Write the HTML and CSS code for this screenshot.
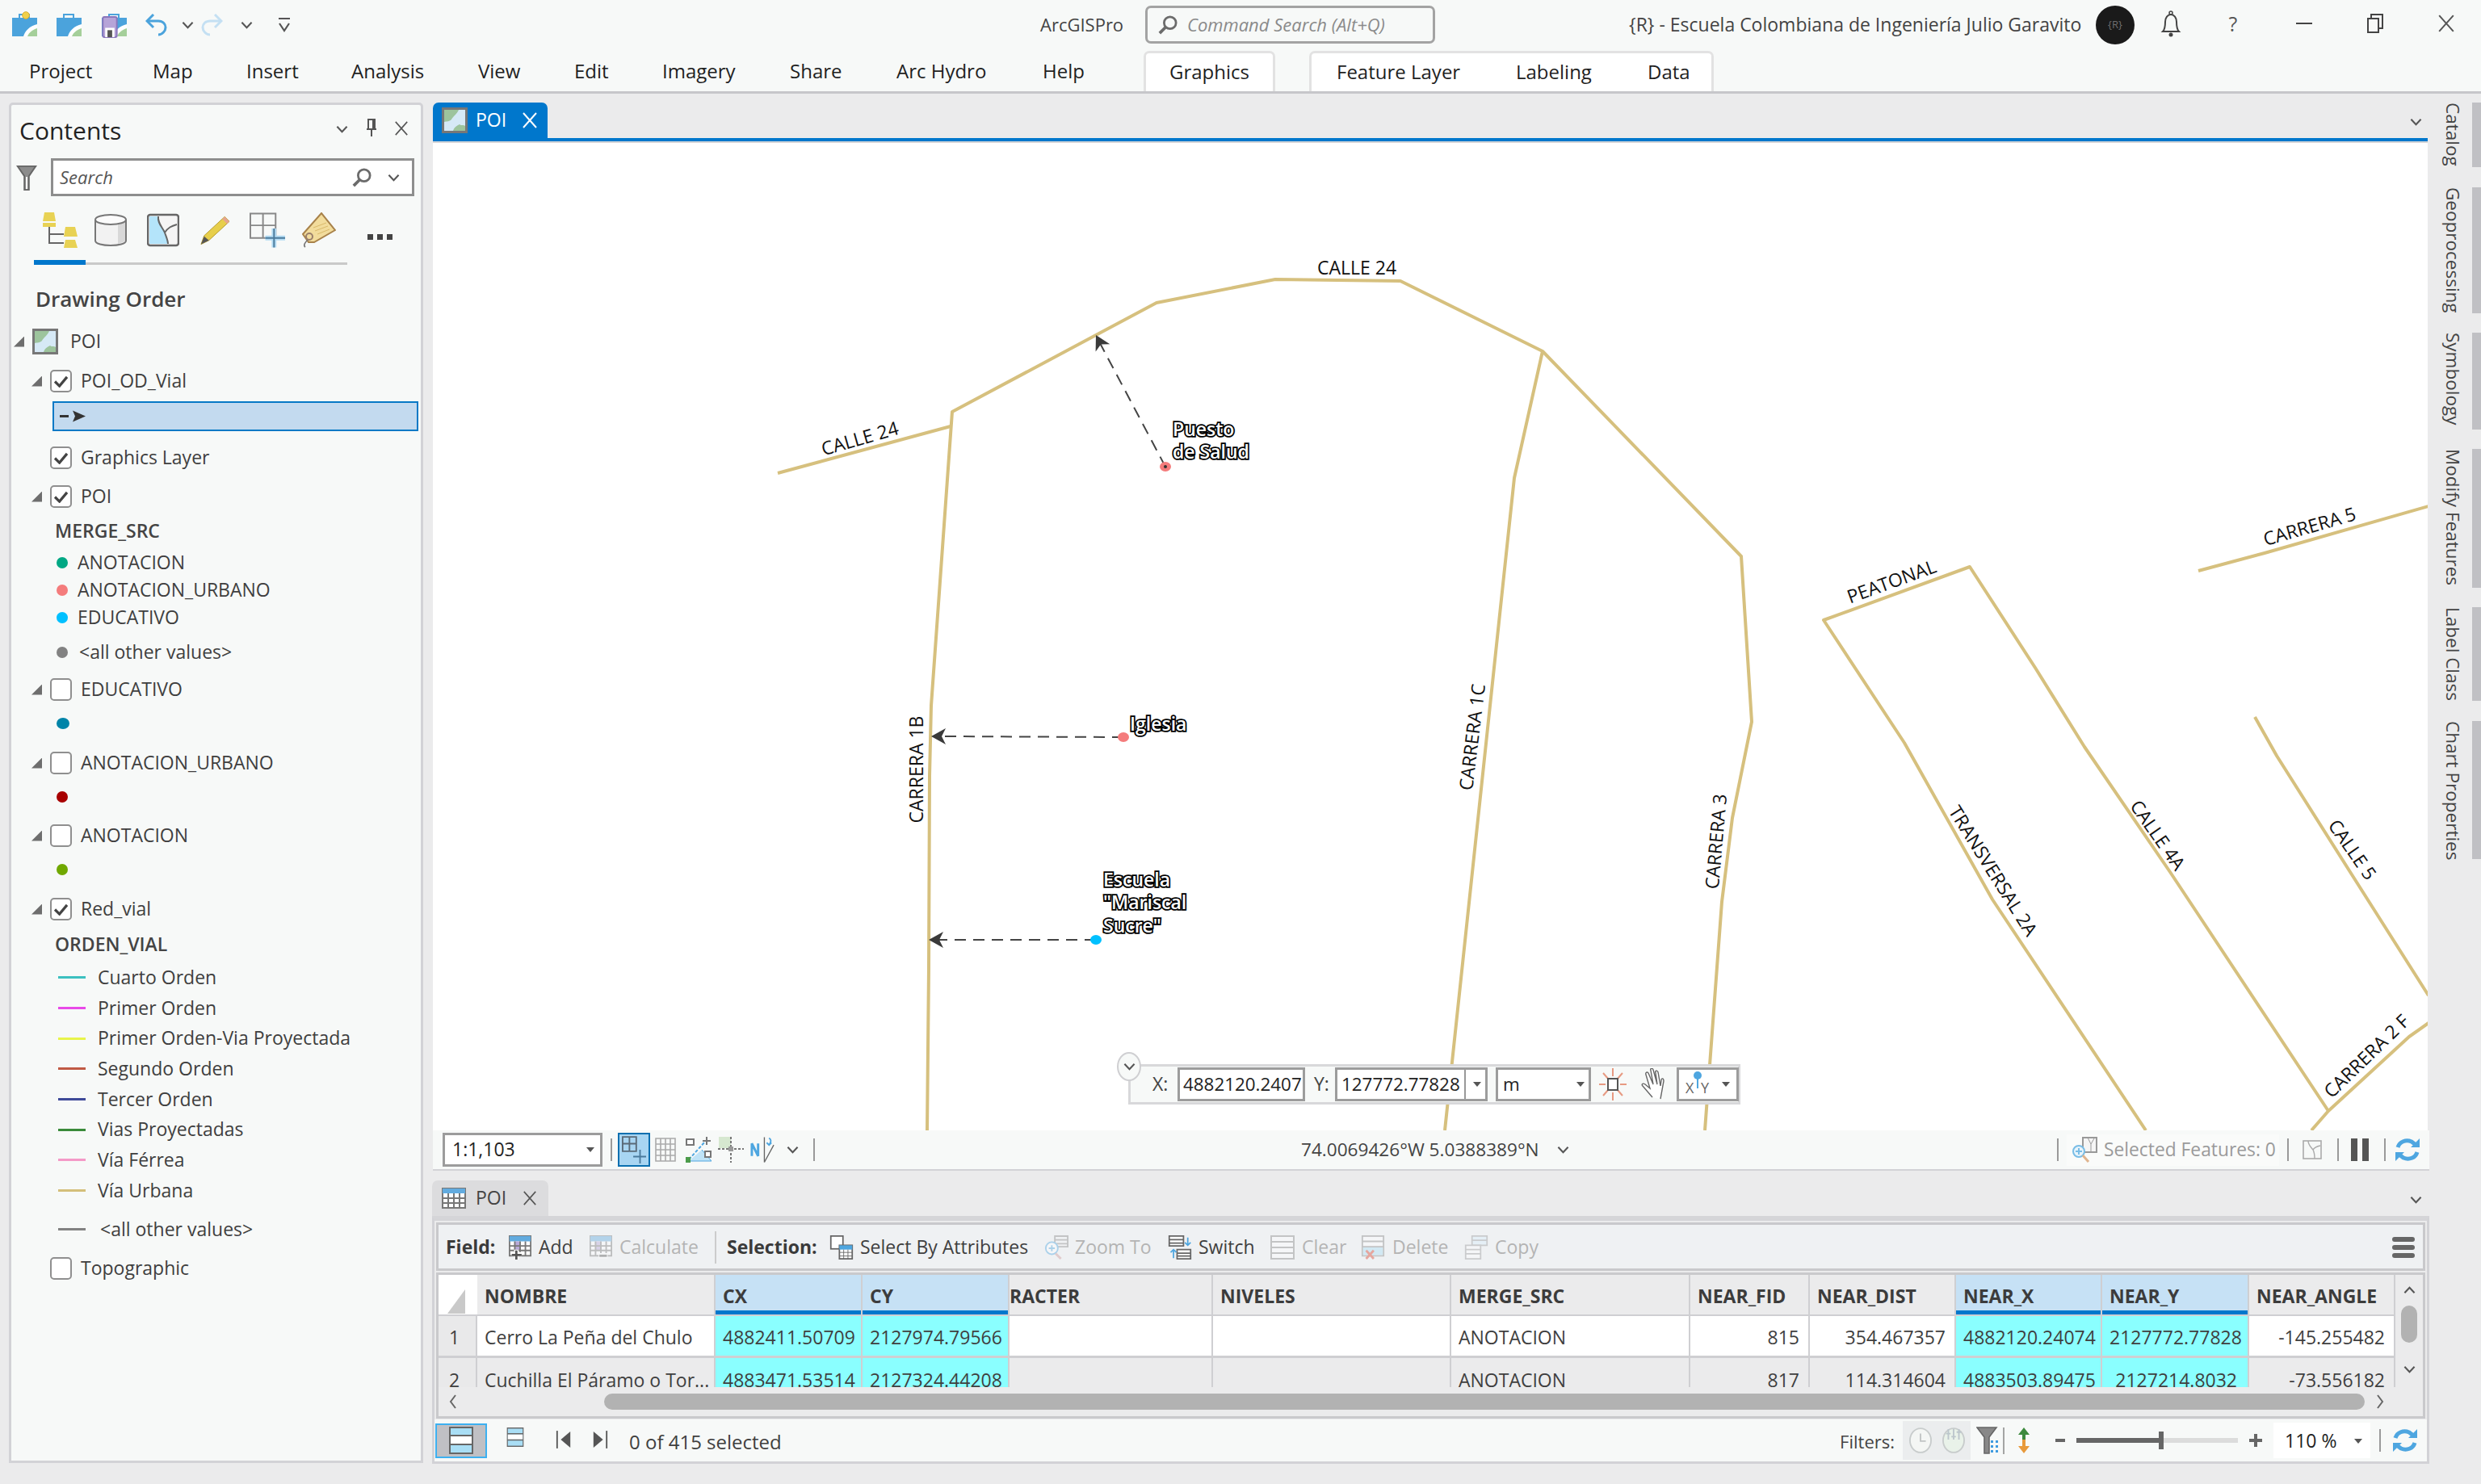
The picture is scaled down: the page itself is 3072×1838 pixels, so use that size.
FILE: index.html
```
<!DOCTYPE html>
<html lang="en">
<head>
<meta charset="utf-8">
<title>ArcGIS Pro</title>
<link rel="stylesheet" href="styles.css">
</head>
<body>
<svg class="defs" width="0" height="0" aria-hidden="true">
  <symbol id="proj" viewBox="0 0 31 28">
    <path d="M9 5V1h12v4" fill="none" stroke="#4ba3dc" stroke-width="2"/>
    <rect x="0" y="5" width="31" height="23" fill="#4ba3dc"/>
    <path d="M14 28c2-7 8-13 17-15v15z" fill="#fff"/>
    <path d="M19 28c2-5 6-8 12-10v10z" fill="#a5cf9a"/>
  </symbol>
  <symbol id="mapthumb" viewBox="0 0 32 32">
    <rect x="1.5" y="1.5" width="29" height="29" fill="#d6e9f6" stroke="#777" stroke-width="3"/>
    <path d="M3 3h18c-2 5-7 8-9 12-3 3-6 2-9 3zM14 29c1-4 4-6 8-8 2 2 5 0 7 2v6z" fill="#9dc49d"/>
  </symbol>
  <symbol id="caret" viewBox="0 0 12 8"><path d="M1 1l5 6 5-6z" fill="#555"/></symbol>
  <symbol id="chev" viewBox="0 0 16 10"><path d="M1.5 1.5L8 8.5l6.5-7" fill="none" stroke="#555" stroke-width="2.2"/></symbol>
  <symbol id="close" viewBox="0 0 20 20"><path d="M2 1l16 18M18 1L2 19" fill="none" stroke="#555" stroke-width="1.8"/></symbol>
  <symbol id="lens" viewBox="0 0 26 26"><circle cx="16" cy="10" r="8" fill="none" stroke="#6b6b6b" stroke-width="3"/><path d="M10 16l-8 8" stroke="#6b6b6b" stroke-width="4"/></symbol>
  <symbol id="check" viewBox="0 0 20 16"><path d="M2 8l6 6L18 2" fill="none" stroke="#444" stroke-width="3.4"/></symbol>
  <symbol id="refresh" viewBox="0 0 32 32">
    <path d="M4 13C6 6 14 3 21 6l4 3M28 19c-2 7-10 10-17 7l-4-3" fill="none" stroke="#4ea6e0" stroke-width="5"/>
    <path d="M31 2v11H20zM1 30V19h11z" fill="#4ea6e0"/>
  </symbol>
  <symbol id="tableic" viewBox="0 0 30 26">
    <rect x="1" y="1" width="28" height="24" fill="#fff" stroke="#777" stroke-width="2"/>
    <rect x="1" y="1" width="28" height="6" fill="#62abdf"/>
    <path d="M1 13h28M1 19h28M8 7v18M15 7v18M22 7v18" stroke="#777" stroke-width="2"/>
  </symbol>
  <symbol id="rows" viewBox="0 0 30 30">
    <rect x="1" y="1" width="28" height="28" fill="#fff" stroke="#888" stroke-width="2"/>
    <path d="M1 8h28M1 15h28M1 22h28" stroke="#888" stroke-width="2"/>
  </symbol>
  <symbol id="rowsblue" viewBox="0 0 30 34">
    <rect x="1" y="1" width="28" height="32" fill="#a9def5" stroke="#666" stroke-width="2"/>
    <rect x="2" y="12" width="26" height="9" fill="#fff"/>
    <path d="M1 11h28M1 22h28" stroke="#666" stroke-width="2"/>
  </symbol>
  <symbol id="tablefield" viewBox="0 0 30 32">
    <rect x="1" y="1" width="28" height="26" fill="#fff" stroke="#777" stroke-width="2"/>
    <rect x="1" y="1" width="28" height="7" fill="#62abdf"/>
    <rect x="8" y="8" width="7" height="12" fill="#b9a9d8"/>
    <path d="M1 14h28M1 20h28M8 8v19M15 8v19M22 8v19" stroke="#777" stroke-width="2"/>
  </symbol>
</svg>

<div class="app">
  <header class="titlebar">
    <div class="qat">
      <button class="qa qa-save"><svg class="i31" aria-hidden="true"><use href="#proj"/></svg><svg class="sun" viewBox="0 0 16 16" aria-hidden="true"><circle cx="8" cy="8" r="5" fill="#f0d04a" stroke="#d5a82a"/></svg></button>
      <button class="qa qa-open"><svg class="i31" aria-hidden="true"><use href="#proj"/></svg></button>
      <button class="qa qa-saveas"><svg class="i31" aria-hidden="true"><use href="#proj"/></svg><svg class="floppy" viewBox="0 0 20 28" aria-hidden="true"><rect x="1" y="1" width="18" height="26" rx="2" fill="#b6a4d8" stroke="#8a76bc" stroke-width="2"/><rect x="4" y="15" width="12" height="12" fill="#fff"/><rect x="7" y="18" width="6" height="9" fill="#555"/></svg></button>
      <button class="qa qa-undo"><svg class="i28" viewBox="0 0 28 28" aria-hidden="true"><path d="M3 9h13c6 0 9 4 9 8s-4 9-9 9" fill="none" stroke="#4ba3dc" stroke-width="3"/><path d="M10 1L2 9l8 8" fill="none" stroke="#4ba3dc" stroke-width="3"/></svg></button>
      <button class="qa qa-c1"><svg class="i14" aria-hidden="true"><use href="#chev"/></svg></button>
      <button class="qa qa-redo"><svg class="i28" viewBox="0 0 28 28" aria-hidden="true"><path d="M25 9H12c-6 0-9 4-9 8s4 9 9 9" fill="none" stroke="#c4e0f3" stroke-width="3"/><path d="M18 1l8 8-8 8" fill="none" stroke="#c4e0f3" stroke-width="3"/></svg></button>
      <button class="qa qa-c2"><svg class="i14" aria-hidden="true"><use href="#chev"/></svg></button>
      <button class="qa qa-more"><svg class="i16" viewBox="0 0 16 18" aria-hidden="true"><path d="M1 1h14M2 7l6 9 6-9" fill="none" stroke="#555" stroke-width="2.2"/></svg></button>
    </div>
    <div class="app-name">ArcGISPro</div>
    <div class="cmd-search"><svg class="i24" aria-hidden="true"><use href="#lens"/></svg><span>Command Search (Alt+Q)</span></div>
    <div class="user-name">{R} - Escuela Colombiana de Ingeniería Julio Garavito</div>
    <div class="avatar">{R}</div>
    <button class="win win-bell"><svg class="bell" viewBox="0 0 26 34" aria-hidden="true"><path d="M3 27c3-3 3-7 3-12 0-5 3-9 7-9s7 4 7 9c0 5 0 9 3 12z" fill="none" stroke="#444" stroke-width="2"/><circle cx="13" cy="4" r="2" fill="none" stroke="#444" stroke-width="1.5"/><circle cx="13" cy="31" r="2.5" fill="#444"/></svg></button>
    <button class="win win-help">?</button>
    <button class="win win-min"><span class="minbar"></span></button>
    <button class="win win-rest"><svg class="i22" viewBox="0 0 20 24" aria-hidden="true"><rect x="1" y="6" width="13" height="17" fill="none" stroke="#444" stroke-width="2"/><path d="M5 5V1h14v17h-4" fill="none" stroke="#444" stroke-width="2"/></svg></button>
    <button class="win win-close"><svg class="i22" aria-hidden="true"><use href="#close"/></svg></button>
  </header>

  <nav class="ribbon">
    <span>Project</span><span>Map</span><span>Insert</span><span>Analysis</span><span>View</span><span>Edit</span><span>Imagery</span><span>Share</span><span>Arc Hydro</span><span>Help</span>
    <span class="ctx ctx-one">Graphics</span>
    <span class="gap"></span>
    <div class="ctx ctx-group"><span>Feature Layer</span><span>Labeling</span><span>Data</span></div>
  </nav>

  <main class="workspace">
    <aside class="leftcol">
      <section class="contents">
        <div class="c-head">
          <h2>Contents</h2>
          <svg class="i14 c-chev" aria-hidden="true"><use href="#chev"/></svg>
          <svg class="c-pin" viewBox="0 0 14 22" aria-hidden="true"><path d="M3 1h8v12H3zM1 13h12M7 13v9" fill="none" stroke="#555" stroke-width="2"/><rect x="8" y="1" width="3" height="12" fill="#555"/></svg>
          <svg class="i18 c-x" aria-hidden="true"><use href="#close"/></svg>
        </div>
        <div class="c-search">
          <svg class="funnel" viewBox="0 0 26 34" aria-hidden="true"><path d="M1 2h24l-9 13v18h-6V15z" fill="#8c8c8c" stroke="#666" stroke-width="2"/><rect x="12" y="16" width="2" height="16" fill="#fff"/></svg>
          <div class="searchbox"><span>Search</span><svg class="i24" aria-hidden="true"><use href="#lens"/></svg><svg class="i14 s-chev" aria-hidden="true"><use href="#chev"/></svg></div>
        </div>
        <div class="c-tools">
          <svg class="t-ic t-tree" viewBox="0 0 44 44" aria-hidden="true"><path d="M3 0h12l2 11H1zM1 13h16v5H1zM29 18h12l3 12H27zM29 34h12l3 10H27z" fill="#e8d254"/><path d="M9 18v20h18M9 27h18" fill="none" stroke="#666" stroke-width="2"/></svg>
          <svg class="t-ic t-db" viewBox="0 0 40 40" aria-hidden="true"><path d="M1 7v26c0 8 38 8 38 0V7" fill="#f2f2f2" stroke="#777" stroke-width="2"/><path d="M29 10h9v24l-9 3z" fill="#d8d8d8"/><ellipse cx="20" cy="7" rx="19" ry="6" fill="#fbfbfb" stroke="#777" stroke-width="2"/></svg>
          <svg class="t-ic t-map" viewBox="0 0 40 40" aria-hidden="true"><rect x="1" y="1" width="38" height="38" rx="3" fill="#f5f5f5" stroke="#666" stroke-width="2.5"/><path d="M3 3h11c-1 8 4 12 8 20 2 6 4 10 4 14H3z" fill="#b4e4fa"/><path d="M14 3c-1 8 4 12 8 20 2 6 4 10 4 14M22 23c4-6 8-8 15-10" fill="none" stroke="#666" stroke-width="2"/></svg>
          <svg class="t-ic t-pen" viewBox="0 0 40 40" aria-hidden="true"><path d="M2 38l4-11L32 3l6 6-26 24z" fill="#e7cf4b" stroke="#b69b30"/><path d="M32 3l6 6-3 3-6-6z" fill="#e6a58e"/><path d="M2 38l4-10 6 5z" fill="#555"/></svg>
          <svg class="t-ic t-grid" viewBox="0 0 46 44" aria-hidden="true"><path d="M1 1h32v31H1zM1 16h32M17 1v31" fill="none" stroke="#888" stroke-width="2"/><path d="M31 20v24M20 32h25" stroke="#b4dcf4" stroke-width="6"/><path d="M31 20v24M20 32h25" stroke="#4a7a9c" stroke-width="2"/></svg>
          <svg class="t-ic t-tag" viewBox="0 0 42 44" aria-hidden="true"><path d="M1 27L24 1l17 21-26 15H8z" fill="#f2dc9c" stroke="#a8824a" stroke-width="2"/><path d="M14 19l16-6M16 23l16-6M19 27l15-6" stroke="#d9b96a"/><circle cx="9" cy="30" r="4" fill="none" stroke="#9a7f6a" stroke-width="2"/><path d="M7 34c-3 3-6 7-3 9" fill="none" stroke="#777" stroke-width="1.6"/></svg>
          <span class="t-dots"><i></i><i></i><i></i></span>
        </div>
        <div class="c-rule"><span></span></div>

        <div class="tree">
          <h3 class="t-heading">Drawing Order</h3>
          <div class="row map-row m14"><i class="tri"></i><svg class="map-ic" aria-hidden="true"><use href="#mapthumb"/></svg><span>POI</span></div>
          <div class="row lvl m11"><i class="tri"></i><b class="cb on"><svg aria-hidden="true"><use href="#check"/></svg></b><span>POI_OD_Vial</span></div>
          <div class="sym-sel"><i class="dash"></i><svg class="sym-arrow" viewBox="0 0 16 14" aria-hidden="true"><path d="M0 0l16 7-16 7 3-7z" fill="#333"/></svg></div>
          <div class="row lvl nt m14"><b class="cb on"><svg aria-hidden="true"><use href="#check"/></svg></b><span>Graphics Layer</span></div>
          <div class="row lvl m10"><i class="tri"></i><b class="cb on"><svg aria-hidden="true"><use href="#check"/></svg></b><span>POI</span></div>
          <div class="field m8">MERGE_SRC</div>
          <div class="leg m8"><i class="dot d-anot"></i><span>ANOTACION</span></div>
          <div class="leg"><i class="dot d-urb"></i><span>ANOTACION_URBANO</span></div>
          <div class="leg"><i class="dot d-edu"></i><span>EDUCATIVO</span></div>
          <div class="leg other m9"><i class="dot d-oth"></i><span>&lt;all other values&gt;</span></div>
          <div class="row lvl m10"><i class="tri"></i><b class="cb"></b><span>EDUCATIVO</span></div>
          <div class="solo m8"><i class="dot d-edu2"></i></div>
          <div class="row lvl m15"><i class="tri"></i><b class="cb"></b><span>ANOTACION_URBANO</span></div>
          <div class="solo m8"><i class="dot d-urb2"></i></div>
          <div class="row lvl m14"><i class="tri"></i><b class="cb"></b><span>ANOTACION</span></div>
          <div class="solo m8"><i class="dot d-anot2"></i></div>
          <div class="row lvl m15"><i class="tri"></i><b class="cb on"><svg aria-hidden="true"><use href="#check"/></svg></b><span>Red_vial</span></div>
          <div class="field m9">ORDEN_VIAL</div>
          <div class="ln m8"><i class="l-cuarto"></i><span>Cuarto Orden</span></div>
          <div class="ln"><i class="l-primer"></i><span>Primer Orden</span></div>
          <div class="ln"><i class="l-proy"></i><span>Primer Orden-Via Proyectada</span></div>
          <div class="ln"><i class="l-seg"></i><span>Segundo Orden</span></div>
          <div class="ln"><i class="l-ter"></i><span>Tercer Orden</span></div>
          <div class="ln"><i class="l-viap"></i><span>Vias Proyectadas</span></div>
          <div class="ln"><i class="l-fer"></i><span>Vía Férrea</span></div>
          <div class="ln"><i class="l-urb"></i><span>Vía Urbana</span></div>
          <div class="ln ln-other m10"><i class="l-oth"></i><span>&lt;all other values&gt;</span></div>
          <div class="row lvl nt m11"><b class="cb"></b><span>Topographic</span></div>
        </div>
      </section>
    </aside>

    <section class="center">
      <div class="doc-tabs">
        <div class="doc-tab"><svg class="map-ic" aria-hidden="true"><use href="#mapthumb"/></svg><span>POI</span><svg class="tab-x" viewBox="0 0 20 20" aria-hidden="true"><path d="M2 1l16 18M18 1L2 19" fill="none" stroke="#fff" stroke-width="2"/></svg></div>
        <svg class="i14 dock-chev" aria-hidden="true"><use href="#chev"/></svg>
      </div>
      <div class="map">
        <svg class="map-svg" viewBox="538 177 2468 1223" width="2468" height="1223" role="img" aria-label="Map">
          <g class="roads">
            <polyline points="963,586 1177,528"/>
            <polyline points="1148,1400 1150,1200 1151,961 1153,874 1179,510 1357,415 1432,375 1579,346 1734,348 1910,435 2156,689 2169,894 2145,1013 2132,1117 2111,1400"/>
            <polyline points="1910,435 1875,592 1789,1400"/>
            <polyline points="2883,1376 2687,1080 2581,925 2520,827 2439,702 2258,768 2358,920 2467,1114 2657,1400"/>
            <polyline points="2722,707 2804,685 3007,627"/>
            <polyline points="2792,888 2819,936 2910,1080 3007,1233"/>
            <polyline points="3007,1267 2983,1284 2883,1376 2862,1400"/>
          </g>
          <g class="leaders">
            <line x1="1443" y1="578" x2="1362" y2="425"/>
            <line x1="1391" y1="913" x2="1165" y2="912"/>
            <line x1="1357" y1="1164" x2="1162" y2="1164"/>
          </g>
          <g class="heads">
            <path transform="translate(1357 415) rotate(62)" d="M0 0l18-10-5 10 5 10z"/>
            <path transform="translate(1153 912)" d="M0 0l18-10-5 10 5 10z"/>
            <path transform="translate(1150 1164)" d="M0 0l18-10-5 10 5 10z"/>
          </g>
          <ellipse class="pt-urb" cx="1443" cy="578" rx="7" ry="6"/>
          <ellipse class="pt-urb" cx="1391" cy="913" rx="7" ry="6"/>
          <ellipse class="pt-edu" cx="1357" cy="1164" rx="7" ry="6"/>
          <circle class="pt-mark" cx="1443" cy="578" r="2"/>
          <g class="road-labels">
            <text x="1680" y="340">CALLE 24</text>
            <text transform="translate(1067 551) rotate(-16)">CALLE 24</text>
            <text transform="translate(1143 953) rotate(-90)">CARRERA 1B</text>
            <text transform="translate(1831 914) rotate(-83)">CARRERA 1C</text>
            <text transform="translate(2133 1043) rotate(-85)">CARRERA 3</text>
            <text transform="translate(2345 728) rotate(-20)">PEATONAL</text>
            <text transform="translate(2862 660) rotate(-16)">CARRERA 5</text>
            <text transform="translate(2665 1039) rotate(55)">CALLE 4A</text>
            <text transform="translate(2461 1083) rotate(58)">TRANSVERSAL 2A</text>
            <text transform="translate(2906 1057) rotate(55)">CALLE 5</text>
            <text transform="translate(2936 1314) rotate(-44)">CARRERA 2 F</text>
          </g>
          <g class="poi-labels">
            <text x="1452" y="540">Puesto</text>
            <text x="1452" y="568">de Salud</text>
            <text x="1399" y="905">Iglesia</text>
            <text x="1366" y="1098">Escuela</text>
            <text x="1366" y="1126">"Mariscal</text>
            <text x="1366" y="1155">Sucre"</text>
          </g>
        </svg>
        <div class="coord">
          <button class="coord-toggle"><svg class="i14" aria-hidden="true"><use href="#chev"/></svg></button>
          <span class="c-lbl">X:</span>
          <div class="c-field c-x-f">4882120.2407</div>
          <span class="c-lbl c-lbl-y">Y:</span>
          <div class="c-field c-y-f"><span>127772.77828</span><svg class="i12" aria-hidden="true"><use href="#caret"/></svg></div>
          <div class="c-field c-unit"><span>m</span><svg class="i12" aria-hidden="true"><use href="#caret"/></svg></div>
          <svg class="c-sun" viewBox="0 0 34 40" aria-hidden="true"><path d="M17 0v10M17 30v10M0 20h8M26 20h8M5 6l7 8M29 6l-7 8M5 34l7-8M29 34l-7-8" stroke="#e79a82" stroke-width="2"/><rect x="11" y="13" width="12" height="14" fill="#fff" stroke="#555" stroke-width="2"/></svg>
          <svg class="c-hand" viewBox="0 0 34 40" aria-hidden="true"><path d="M27 38l4-22c0-4-3-4-3-1l-1 7-3-17c-1-3-4-2-3 1l2 14-5-18c-1-3-4-2-3 1l3 17-6-14c-1-2-4-1-3 2l5 17-6-5c-3-2-5 0-3 2l12 14" fill="#fff" stroke="#666" stroke-width="1.4"/></svg>
          <div class="c-field c-xy"><svg class="xy-ic" viewBox="0 0 30 34" aria-hidden="true"><circle cx="15" cy="6" r="5" fill="#4ea6e0"/><path d="M15 8v14" stroke="#4ea6e0" stroke-width="2"/></svg><span class="xy-x">X</span><span class="xy-y">Y</span><svg class="i12" aria-hidden="true"><use href="#caret"/></svg></div>
        </div>
      </div>
      <div class="map-status">
        <div class="scale"><span>1:1,103</span><svg class="i12" aria-hidden="true"><use href="#caret"/></svg></div>
        <i class="sep s-a"></i>
        <button class="ms-btn ms-active"><svg class="ms-i32" viewBox="0 0 32 36" aria-hidden="true"><path d="M1 1h18v19H1zM1 10h18M10 1v19" fill="none" stroke="#5a6a78" stroke-width="2"/><path d="M24 18v18M15 27h17" stroke="#4a7a9c" stroke-width="2"/></svg></button>
        <svg class="ms-grid" viewBox="0 0 26 30" aria-hidden="true"><path d="M1 1h24v28H1zM1 8h24M1 15h24M1 22h24M7 1v28M13 1v28M19 1v28" fill="none" stroke="#aaa" stroke-width="1.6"/></svg>
        <svg class="ms-snap" viewBox="0 0 32 32" aria-hidden="true"><rect x="1" y="3" width="9" height="7" fill="#fff" stroke="#777" stroke-width="2"/><path d="M26 0v10M21 5h10" stroke="#777" stroke-width="2"/><path d="M4 28L24 6" stroke="#4ea6e0" stroke-width="2" stroke-dasharray="4 2"/><path d="M4 30h28L20 16" fill="#bfe3f7" stroke="#4ea6e0"/><rect x="24" y="18" width="7" height="7" fill="#fff" stroke="#777" stroke-width="2"/><rect x="0" y="25" width="6" height="7" fill="#4b9b4b"/></svg>
        <svg class="ms-constraint" viewBox="0 0 32 32" aria-hidden="true"><rect x="1" y="0" width="15" height="14" fill="#d6e8d0"/><path d="M16 0v32M0 15h32" stroke="#777" stroke-width="2" stroke-dasharray="3 2"/><rect x="13" y="12" width="6" height="6" fill="#999"/></svg>
        <svg class="ms-north" viewBox="0 0 32 32" aria-hidden="true"><path d="M2 24V8l8 16V8" fill="none" stroke="#4ea6e0" stroke-width="3"/><path d="M18 0v32l12-22" fill="none" stroke="#666" stroke-width="1.4"/><path d="M24 1c3 2 3 5 0 9m-3-3l3 3 3-3" fill="none" stroke="#4ea6e0" stroke-width="2"/></svg>
        <svg class="i14 ms-chev" aria-hidden="true"><use href="#chev"/></svg>
        <i class="sep s-b"></i>
        <div class="ms-coords">74.0069426°W 5.0388389°N</div>
        <svg class="i14 ms-cc" aria-hidden="true"><use href="#chev"/></svg>
        <span class="flex-fill"></span>
        <i class="sep"></i>
        <div class="sel-feat"><svg class="sf-ic" viewBox="0 0 32 32" aria-hidden="true"><rect x="14" y="1" width="17" height="18" fill="#f5f5f5" stroke="#999" stroke-width="2"/><path d="M20 1l4 8 4-7M24 9v10" fill="none" stroke="#999"/><circle cx="9" cy="18" r="7" fill="#e8f4fb" stroke="#79bde6" stroke-width="2"/><path d="M9 14v8M5 18h8" stroke="#79bde6" stroke-width="2"/><path d="M14 23l7 8" stroke="#e0b48e" stroke-width="3"/></svg><span>Selected Features: 0</span></div>
        <i class="sep s-c"></i>
        <svg class="ms-mapic" viewBox="0 0 24 24" aria-hidden="true"><rect x="1" y="1" width="22" height="22" fill="none" stroke="#aaa" stroke-width="1.6"/><path d="M7 1c0 5 3 7 6 11 2 4 2 7 2 11M13 12c2-3 4-4 9-5" fill="none" stroke="#aaa" stroke-width="1.4"/></svg>
        <i class="sep s-d"></i>
        <span class="pause"><i></i><i></i></span>
        <i class="sep s-e"></i>
        <svg class="ms-ref" aria-hidden="true"><use href="#refresh"/></svg>
      </div>

      <div class="table-tabs">
        <div class="table-tab"><svg class="tt-ic" aria-hidden="true"><use href="#tableic"/></svg><span>POI</span><svg class="i18 tt-x" aria-hidden="true"><use href="#close"/></svg></div>
        <svg class="i14 dock-chev" aria-hidden="true"><use href="#chev"/></svg>
      </div>
      <div class="attr">
        <div class="attr-tools">
          <b class="tb-lbl">Field:</b>
          <svg class="tb-ic" viewBox="0 0 30 32" aria-hidden="true"><use href="#tablefield"/><path d="M10 19v13M4 25h13" stroke="#fff" stroke-width="6"/><path d="M10 20v12M4 26h13" stroke="#555" stroke-width="3"/></svg><span>Add</span>
          <svg class="tb-ic faded" viewBox="0 0 30 32" aria-hidden="true"><use href="#tablefield"/><path d="M12 27h12" stroke="#fff" stroke-width="7"/><path d="M13 27h10" stroke="#555" stroke-width="3"/></svg><span class="dis">Calculate</span>
          <i class="tb-sep"></i>
          <b class="tb-lbl">Selection:</b>
          <svg class="tb-ic" viewBox="0 0 32 34" aria-hidden="true"><rect x="1" y="1" width="17" height="18" fill="#fff" stroke="#666" stroke-width="2"/><rect x="13" y="14" width="18" height="19" fill="#fff" stroke="#666" stroke-width="2"/><rect x="13" y="14" width="18" height="6" fill="#4ea6e0"/><path d="M13 24h18M13 29h18M19 20v13M25 20v13" stroke="#666"/></svg><span>Select By Attributes</span>
          <svg class="tb-ic faded" viewBox="0 0 32 32" aria-hidden="true"><path d="M14 1h17v14H14zM14 6h17M14 11h17" fill="none" stroke="#888" stroke-width="2"/><circle cx="10" cy="17" r="8" fill="#fff" stroke="#4ea6e0" stroke-width="2"/><path d="M10 13v8M6 17h8" stroke="#4ea6e0" stroke-width="2"/><path d="M15 24l7 7" stroke="#c99" stroke-width="3"/></svg><span class="dis">Zoom To</span>
          <svg class="tb-ic" viewBox="0 0 32 34" aria-hidden="true"><path d="M1 1h20v14H1zM1 6h20M1 11h20M12 20h19v13H12zM12 25h19M12 29h19" fill="#fff" stroke="#666" stroke-width="2"/><path d="M27 3v11m-4-4l4 4 4-4M7 32V20m-4 4l4-4 4 4" fill="none" stroke="#4ea6e0" stroke-width="2"/></svg><span>Switch</span>
          <svg class="tb-ic faded" aria-hidden="true"><use href="#rows"/></svg><span class="dis">Clear</span>
          <svg class="tb-ic faded" viewBox="0 0 30 32" aria-hidden="true"><rect x="1" y="1" width="28" height="26" fill="#fff" stroke="#888" stroke-width="2"/><path d="M1 8h28M1 15h28" stroke="#888" stroke-width="2"/><rect x="2" y="16" width="26" height="10" fill="#a9def5"/><path d="M6 20l10 11M16 20L6 31" stroke="#d9402a" stroke-width="3"/></svg><span class="dis">Delete</span>
          <svg class="tb-ic faded" viewBox="0 0 32 34" aria-hidden="true"><path d="M10 1h21v13H10zM10 7h21" fill="#d8eefb" stroke="#999" stroke-width="2"/><path d="M1 14h21v19H1zM1 20h21M1 26h21" fill="#fff" stroke="#999" stroke-width="2"/></svg><span class="dis">Copy</span>
          <span class="tb-menu"><i></i><i></i><i></i></span>
        </div>
        <div class="attr-table">
          <div class="tbl-wrap">
            <div class="tbl">
              <div class="tr th">
                <div class="td corner"><i></i></div><div class="td">NOMBRE</div><div class="td hi">CX</div><div class="td hi">CY</div><div class="td flush">RACTER</div><div class="td">NIVELES</div><div class="td">MERGE_SRC</div><div class="td">NEAR_FID</div><div class="td">NEAR_DIST</div><div class="td hi">NEAR_X</div><div class="td hi">NEAR_Y</div><div class="td">NEAR_ANGLE</div>
              </div>
              <div class="tr r1">
                <div class="td num">1</div><div class="td">Cerro La Peña del Chulo</div><div class="td cy">4882411.50709</div><div class="td cy">2127974.79566</div><div class="td"></div><div class="td"></div><div class="td">ANOTACION</div><div class="td rt">815</div><div class="td rt">354.467357</div><div class="td cy">4882120.24074</div><div class="td cy">2127772.77828</div><div class="td rt">-145.255482</div>
              </div>
              <div class="tr r2">
                <div class="td num">2</div><div class="td">Cuchilla El Páramo o Tor...</div><div class="td cy">4883471.53514</div><div class="td cy">2127324.44208</div><div class="td"></div><div class="td"></div><div class="td">ANOTACION</div><div class="td rt">817</div><div class="td rt">114.314604</div><div class="td cy">4883503.89475</div><div class="td cy rtc">2127214.8032</div><div class="td rt">-73.556182</div>
              </div>
            </div>
            <div class="vscroll">
              <svg class="i14 flip" aria-hidden="true"><use href="#chev"/></svg>
              <span class="v-thumb"></span>
              <svg class="i14" aria-hidden="true"><use href="#chev"/></svg>
            </div>
          </div>
          <div class="hscroll">
            <svg class="h-arrow" viewBox="0 0 10 18" aria-hidden="true"><path d="M8 1L2 9l6 8" fill="none" stroke="#666" stroke-width="2"/></svg>
            <span class="h-thumb"></span>
            <svg class="h-arrow" viewBox="0 0 10 18" aria-hidden="true"><path d="M2 1l6 8-6 8" fill="none" stroke="#666" stroke-width="2"/></svg>
          </div>
        </div>
        <div class="attr-foot">
          <button class="view-btn"><svg class="vb-ic" aria-hidden="true"><use href="#rowsblue"/></svg></button>
          <svg class="vb2" viewBox="0 0 30 34" aria-hidden="true"><use href="#rowsblue"/></svg>
          <svg class="nav-ic n-first" viewBox="0 0 22 26" aria-hidden="true"><path d="M2 1v24" stroke="#555" stroke-width="2"/><path d="M20 2v22L7 13z" fill="#555"/></svg>
          <svg class="nav-ic n-last" viewBox="0 0 22 26" aria-hidden="true"><path d="M20 1v24" stroke="#555" stroke-width="2"/><path d="M2 2v22l13-11z" fill="#555"/></svg>
          <span class="sel-count">0 of 415 selected</span>
          <span class="flex-fill"></span>
          <span class="filters">Filters:</span>
          <div class="filter-box">
            <svg class="f-round" viewBox="0 0 30 34" aria-hidden="true"><ellipse cx="15" cy="17" rx="14" ry="16" fill="#f4f6f4" stroke="#c8cccc" stroke-width="2"/><path d="M15 8v10h7" fill="none" stroke="#c0c4c4" stroke-width="2"/></svg>
            <svg class="f-round" viewBox="0 0 30 34" aria-hidden="true"><ellipse cx="15" cy="17" rx="14" ry="16" fill="#e9f2e9" stroke="#c8cccc" stroke-width="2"/><path d="M8 2v14M15 2v14M22 2v14M5 8h6M12 12h6M19 6h6" stroke="#bcc6cc" stroke-width="2"/></svg>
          </div>
          <svg class="f-funnel" viewBox="0 0 36 34" aria-hidden="true"><path d="M1 1h24l-9 12v20H10V13z" fill="#888" stroke="#666" stroke-width="1.6"/><path d="M18 17h3v3h-3zM24 17h3v3h-3zM18 23h3v3h-3zM24 23h3v3h-3zM18 29h3v3h-3zM24 29h3v3h-3z" fill="#3f9be0"/><path d="M34 1v33" stroke="#888" stroke-width="1.5"/></svg>
          <svg class="f-arrows" viewBox="0 0 18 34" aria-hidden="true"><path d="M9 1L2 10h5v8h4v-8h5z" fill="#3e8a3e"/><path d="M9 33l7-9h-5v-8H7v8H2z" fill="#e89a3c"/></svg>
          <i class="z-minus"></i>
          <div class="slider"><span class="slider-fill"></span><span class="slider-thumb"></span></div>
          <span class="z-plus"><i></i><i></i></span>
          <div class="zoom-box"><span>110 %</span><svg class="i12" aria-hidden="true"><use href="#caret"/></svg></div>
          <i class="sep s-f"></i>
          <svg class="ms-ref f-ref" aria-hidden="true"><use href="#refresh"/></svg>
        </div>
      </div>
    </section>

    <aside class="side">
      <div class="side-tab st1"><span>Catalog</span></div>
      <div class="side-tab st2"><span>Geoprocessing</span></div>
      <div class="side-tab st3"><span>Symbology</span></div>
      <div class="side-tab st4"><span>Modify Features</span></div>
      <div class="side-tab st5"><span>Label Class</span></div>
      <div class="side-tab st6"><span>Chart Properties</span></div>
    </aside>
  </main>
</div>
</body>
</html>
```
FILE: styles.css
```
* { box-sizing: border-box; }
html, body { margin: 0; padding: 0; }
body { font: 23px/1.2 "Open Sans", "Noto Sans", sans-serif; color: #3f3f3f; background: #f0f0f0; }
button { border: 0; background: none; padding: 0; margin: 0; font: inherit; color: inherit; display: flex; align-items: center; justify-content: center; }
.defs { position: absolute; }
i, b { font-style: normal; }
svg { display: block; flex: none; }
.app { width: 3072px; height: 1838px; display: flex; flex-direction: column; overflow: hidden; background: #ebebec; }
.flex-fill { flex: 1; }
.i31 { width: 31px; height: 28px; }
.i28 { width: 28px; height: 28px; }
.i24 { width: 24px; height: 24px; }
.i22 { width: 22px; height: 24px; }
.i18 { width: 18px; height: 20px; }
.i16 { width: 16px; height: 18px; }
.i14 { width: 15px; height: 10px; }
.i12 { width: 12px; height: 8px; }

/* title bar */
.titlebar { height: 57px; flex: none; display: flex; align-items: center; background: #f7f9f8; padding-top: 4px; }
.qat { width: 1288px; flex: none; display: flex; padding-left: 15px; align-items: center; }
.qa { flex: none; position: relative; justify-content: flex-start; }
.qa-save { width: 55px; }
.qa-open { width: 56px; }
.qa-saveas { width: 54px; }
.qa-undo { width: 45px; }
.qa-c1 { width: 23px; }
.qa-redo { width: 50px; }
.qa-c2 { width: 46px; }
.qa-more { width: 20px; }
.sun { position: absolute; left: 10px; top: -5px; width: 14px; height: 14px; }
.floppy { position: absolute; left: 0; top: 3px; width: 20px; height: 27px; }
.app-name { width: 130px; flex: none; font-size: 22px; color: #444; }
.cmd-search { width: 359px; height: 47px; flex: none; display: flex; align-items: center; gap: 12px; padding-left: 13px; border: 3px solid #a3a3a3; border-radius: 7px; color: #8a8a8a; font-style: italic; font-size: 22px; }
.user-name { width: 578px; margin-left: 240px; flex: none; white-space: nowrap; font-size: 23px; color: #444; }
.avatar { width: 48px; height: 48px; flex: none; border-radius: 50%; background: #1a1a1a; color: #6e6e6e; font-size: 13px; display: flex; align-items: center; justify-content: center; }
.win { flex: none; height: 50px; margin-top: -4px; }
.win-bell { width: 90px; }
.bell { width: 26px; height: 34px; }
.win-help { width: 64px; font-size: 25px; color: #555; }
.win-min { width: 88px; margin-left: 12px; }
.minbar { width: 20px; height: 2px; background: #444; }
.win-rest { width: 88px; }
.win-close { width: 87px; }

/* ribbon */
.ribbon { height: 56px; flex: none; background: #f7f9f8; padding-left: 36px; display: grid; align-items: center; grid-template-columns: 153px 116px 130px 157px 119px 109px 158px 132px 181px 125px 163px 42px 501px; color: #1f1f1f; padding-top: 6px; white-space: nowrap; font-size: 24px; }
.ctx { height: 50px; align-self: end; background: #fff; border: 3px solid #e2e2e2; border-bottom: 0; border-radius: 7px 7px 0 0; display: flex; align-items: center; }
.ctx-one { justify-content: center; }
.ctx-group { display: grid; grid-template-columns: 222px 163px 1fr; padding-left: 31px; }

/* workspace */
.workspace { flex: 1; display: flex; border-top: 3px solid #c6c6ca; min-height: 0; }
.leftcol { width: 536px; flex: none; padding: 11px 12px 0 11px; }
.contents { height: 1685px; background: #f7f9f8; border: 3px solid #d2d2d6; border-radius: 5px 5px 0 0; display: flex; flex-direction: column; }
.c-head { height: 44px; margin-top: 10px; display: flex; align-items: center; padding-left: 10px; }
.c-head h2 { margin: 0; font-size: 30px; font-weight: 400; color: #222; width: 392px; white-space: nowrap; }
.c-chev { margin-top: -4px; }
.c-pin { width: 14px; height: 22px; margin-left: 22px; margin-top: -8px; }
.c-x { margin-left: 21px; margin-top: -6px; }
.c-search { height: 47px; margin-top: 12px; display: flex; align-items: center; padding-left: 6px; }
.funnel { width: 26px; height: 32px; margin-right: 17px; }
.searchbox { width: 450px; height: 47px; background: #fff; border: 3px solid #8e8e8e; display: flex; align-items: center; padding-left: 8px; font-style: italic; font-size: 22px; color: #555; }
.searchbox span { width: 362px; }
.s-chev { margin-left: 20px; }
.c-tools { height: 45px; margin-top: 20px; display: flex; padding-left: 38px; }
.t-ic { height: 44px; }
.t-tree { width: 44px; }
.t-db { width: 40px; margin-left: 21px; }
.t-map { width: 40px; margin-left: 25px; }
.t-pen { width: 39px; margin-left: 25px; }
.t-grid { width: 45px; margin-left: 23px; }
.t-tag { width: 42px; margin-left: 20px; }
.t-dots { margin: 27px 0 0 39px; display: flex; gap: 5px; }
.t-dots i { width: 7px; height: 7px; background: #444; }
.c-rule { margin: 14px 0 0 28px; width: 388px; height: 6px; display: flex; align-items: flex-end; border-bottom: 3px solid #c9c9c9; position: relative; }
.c-rule span { width: 64px; height: 6px; background: #0077cc; margin-bottom: -3px; }
.tree { margin-top: 22px; display: flex; flex-direction: column; }
.t-heading { margin: 0; height: 40px; line-height: 40px; padding-left: 30px; font-size: 26px; font-weight: 600; color: #444; }
.m8 { margin-top: 8px; }
.m9 { margin-top: 9px; }
.m10 { margin-top: 10px; }
.m11 { margin-top: 11px; }
.m14 { margin-top: 14px; }
.m15 { margin-top: 15px; }
.row { height: 38px; display: flex; align-items: center; white-space: nowrap; }
.tri { width: 13px; height: 13px; flex: none; background: #6e6e6e; clip-path: polygon(100% 0, 100% 100%, 0 100%); }
.map-row { padding-left: 3px; }
.map-row .map-ic { margin-left: 10px; margin-right: 15px; }
.map-ic { width: 32px; height: 32px; }
.lvl { padding-left: 25px; }
.lvl.nt { padding-left: 48px; }
.cb { width: 27px; height: 28px; flex: none; margin-left: 10px; margin-right: 11px; background: #fff; border: 2.5px solid #8f8f8f; border-radius: 5px; display: flex; align-items: center; justify-content: center; }
.nt .cb { margin-left: 0; }
.cb svg { width: 19px; height: 15px; }
.sym-sel { height: 37px; margin: 6px 3px 0 51px; background: #c3daef; border: 2px solid #0679c6; display: flex; align-items: center; padding-left: 7px; }
.dash { width: 11px; height: 2.5px; background: #333; margin-right: 5px; }
.sym-arrow { width: 16px; height: 15px; }
.field { height: 30px; line-height: 30px; padding-left: 54px; font-weight: 600; color: #444; }
.leg { height: 34px; display: flex; align-items: center; padding-left: 56px; white-space: nowrap; }
.leg .dot { margin-right: 12px; }
.leg.other span { margin-left: 2px; }
.dot { width: 14px; height: 14px; border-radius: 50%; flex: none; }
.d-anot { background: #00a884; }
.d-urb { background: #f47c7c; }
.d-edu { background: #00c0ff; }
.d-oth { background: #828282; }
.d-edu2 { background: #0084a8; width: 16px; }
.d-urb2 { background: #a80000; }
.d-anot2 { background: #70a800; }
.solo { height: 30px; display: flex; align-items: center; padding-left: 56px; }
.ln { height: 37.7px; display: flex; align-items: center; padding-left: 58px; white-space: nowrap; }
.ln i { width: 34px; height: 3px; flex: none; margin-right: 15px; }
.ln-other span { margin-left: 3px; }
.l-cuarto { background: #3cc0c0; }
.l-primer { background: #e84ae8; }
.l-proy { background: #e8f44a; }
.l-seg { background: #c05a44; }
.l-ter { background: #3e4a98; }
.l-viap { background: #3a8a3a; }
.l-fer { background: #f49ac8; }
.l-urb { background: #d4bf7a; }
.l-oth { background: #828282; }

/* center */
.center { width: 2472px; flex: none; padding-top: 11px; display: flex; flex-direction: column; }
.doc-tabs { height: 44px; flex: none; display: flex; align-items: center; justify-content: space-between; padding-right: 9px; }
.doc-tab { width: 142px; height: 44px; background: #0077cc; color: #fff; border-radius: 7px 7px 0 0; display: flex; align-items: center; padding-left: 11px; }
.doc-tab .map-ic { margin-right: 10px; }
.tab-x { width: 20px; height: 20px; margin-left: 19px; }
.dock-chev { margin-top: 4px; }
.map { height: 1229px; flex: none; position: relative; background: #fff; border-top: 4px solid #0077cc; margin-right: 2px; }
.map::before { content: ""; display: block; height: 2px; background: #d5d5d8; }
.map-svg { margin: 0 2px; }
.roads polyline { fill: none; stroke: #d6c07e; stroke-width: 4; stroke-linejoin: round; }
.leaders line { stroke: #444; stroke-width: 2; stroke-dasharray: 14 9; }
.heads path { fill: #3a3a3a; }
.pt-urb { fill: #f47c7c; }
.pt-edu { fill: #00c0ff; }
.pt-mark { fill: #333; }
.road-labels text { font-size: 23px; fill: #111; text-anchor: middle; }
.poi-labels text { font-size: 23px; font-weight: 600; fill: #fff; stroke: #000; stroke-width: 3.6; paint-order: stroke; }

/* coordinate widget */
.coord { position: absolute; left: 861px; top: 1143px; width: 758px; height: 50px; background: #f7f9f8; border: 3px solid #d8d8da; display: flex; align-items: center; }
.coord-toggle { position: absolute; left: -17px; top: -18px; width: 30px; height: 36px; border-radius: 50%; background: #f7f9f8; border: 2px solid #cfcfd2; }
.c-lbl { margin-left: 27px; width: 31px; flex: none; color: #444; }
.c-lbl-y { margin-left: 11px; width: 26px; }
.c-field { height: 42px; background: #fff; border: 3px solid #9c9c9c; display: flex; align-items: center; color: #222; flex: none; white-space: nowrap; overflow: hidden; font-size: 22.4px; }
.c-x-f { width: 158px; padding-left: 4px; }
.c-y-f { width: 189px; padding-left: 5px; position: relative; }
.c-y-f span { width: 154px; border-right: 2px solid #999; height: 100%; display: flex; align-items: center; flex: none; }
.c-y-f svg { margin-left: 8px; }
.c-unit { width: 118px; margin-left: 10px; padding-left: 6px; }
.c-unit span { width: 90px; }
.c-sun { width: 34px; height: 40px; margin-left: 10px; }
.c-hand { width: 34px; height: 40px; margin-left: 15px; }
.c-xy { width: 77px; margin-left: 13px; position: relative; padding-left: 0; }
.xy-ic { width: 30px; height: 34px; margin-left: 8px; }
.xy-x, .xy-y { position: absolute; top: 12px; font-size: 18px; color: #666; }
.xy-x { left: 8px; }
.xy-y { left: 27px; }
.c-xy .i12 { margin-left: 14px; }

/* map status */
.map-status { height: 50px; flex: none; display: flex; align-items: center; background: #f7f9f8; border-bottom: 2px solid #d2d2d6; margin-right: 0; padding-right: 11px; }
.scale { width: 198px; height: 42px; flex: none; margin-left: 12px; background: #fff; border: 3px solid #9c9c9c; display: flex; align-items: center; padding-left: 9px; color: #222; }
.scale span { width: 165px; }
.sep { width: 2px; height: 28px; background: #9a9a9a; flex: none; }
.s-a { margin-left: 10px; }
.ms-btn { width: 40px; height: 42px; flex: none; margin-left: 7px; background: #a8d5f2; border: 2px solid #0a6fb0; }
.ms-i32 { width: 30px; height: 34px; }
.ms-grid { width: 26px; height: 30px; margin-left: 6px; }
.ms-snap { width: 32px; height: 32px; margin-left: 12px; }
.ms-constraint { width: 32px; height: 32px; margin-left: 8px; }
.ms-north { width: 31px; height: 32px; margin-left: 8px; }
.ms-chev { margin-left: 14px; }
.s-b { margin-left: 18px; }
.ms-coords { width: 294px; margin-left: 602px; flex: none; white-space: nowrap; font-size: 22.6px; color: #444; }
.ms-cc { margin-left: 23px; }
.sel-feat { width: 263px; height: 39px; margin-left: 10px; flex: none; background: #fafbfa; display: flex; align-items: center; color: #9a9a9a; padding-left: 6px; white-space: nowrap; }
.sel-feat span { margin-left: 8px; font-size: 22.8px; }
.sf-ic { width: 32px; height: 32px; }
.s-c { margin-left: 10px; }
.ms-mapic { width: 24px; height: 24px; margin-left: 17px; }
.s-d { margin-left: 19px; }
.pause { display: flex; gap: 6px; margin-left: 15px; }
.pause i { width: 8px; height: 28px; background: #555; }
.s-e { margin-left: 19px; }
.ms-ref { width: 32px; height: 32px; margin-left: 11px; }

/* table */
.table-tabs { height: 44px; margin-top: 12px; flex: none; display: flex; align-items: center; justify-content: space-between; padding-right: 9px; }
.table-tab { width: 144px; height: 44px; margin-left: -1px; background: #dcdcde; border-radius: 7px 7px 0 0; display: flex; align-items: center; padding-left: 12px; color: #444; }
.tt-ic { width: 30px; height: 26px; margin-right: 12px; }
.tt-x { margin-left: 20px; }
.attr { height: 307px; flex: none; margin-left: -1px; background: #ebebec; border: 3px solid #d2d2d6; border-top: 6px solid #d5d5d8; padding: 2px 2px 0; display: flex; flex-direction: column; }
.attr-tools { height: 60px; flex: none; background: #eff1f3; border: 3px solid #c9c9cc; display: grid; align-items: center; padding-left: 9px; padding-top: 2px; grid-template-columns: 77px 38px 62px 38px 118px 15px 127px 38px 228px 38px 115px 38px 89px 39px 73px 39px 89px 38px 1fr 38px; white-space: nowrap; }
.tb-lbl { font-weight: 700; color: #3a3a3a; }
.tb-ic { width: 30px; height: 30px; }
.faded { opacity: .42; }
.dis { color: #b4b4b4; }
.tb-sep { width: 2px; height: 40px; background: #ccc; }
.tb-menu { display: flex; flex-direction: column; gap: 4px; }
.tb-menu i { width: 28px; height: 6px; border-radius: 3px; background: #666; }
.attr-table { height: 181px; margin-top: 2px; flex: none; border: 3px solid #c9c9cc; display: flex; flex-direction: column; }
.tbl-wrap { height: 139px; flex: none; display: flex; overflow: hidden; background: #ebebec; }
.tbl { width: 2423px; flex: none; }
.tr { display: grid; grid-template-columns: 48px 295px 182px 182px 252px 295px 296px 148px 181px 181px 182px 181px; white-space: nowrap; }
.td { overflow: hidden; padding-left: 9px; display: flex; align-items: center; border-right: 2px solid #cfcfd2; }
.th { height: 51px; border-bottom: 2px solid #cfcfd2; }
.th .td { font-weight: 700; color: #3c3c3c; padding-top: 4px; }
.th .hi { background: #c6e1f5; box-shadow: inset 0 -5px #0077cc; }
.th .flush { padding-left: 0; }
.corner { background: #fff; border-right: 0; position: relative; }
.corner i { width: 22px; height: 30px; background: #c9c9c9; clip-path: polygon(100% 0, 100% 100%, 0 100%); position: absolute; left: 0; top: 0; margin: 18px 0 0 11px; }
.r1 { height: 52px; background: #fff; border-bottom: 3px solid #cfcfd2; }
.r2 { height: 52px; background: #ebebec; }
.r1 .td, .r2 .td { color: #3f3f3f; padding-top: 4px; }
.num { background: #e9e9ea; color: #3f3f3f; justify-content: flex-start; padding-left: 13px; }
.r1 .num, .r2 .num { padding-left: 13px; }
.cy { background: #8affff; }
.rt { justify-content: flex-end; padding-left: 0; padding-right: 11px; }
.rtc { justify-content: flex-end; padding-right: 13px; }
.vscroll { flex: 1; display: flex; flex-direction: column; align-items: center; padding-top: 14px; background: #ebebec; }
.flip { transform: scaleY(-1); }
.v-thumb { width: 20px; height: 46px; border-radius: 10px; background: #b2b2b2; margin: 14px 0 28px; }
.hscroll { height: 36px; flex: none; display: flex; align-items: center; background: #ebebec; padding-left: 13px; }
.h-arrow { width: 10px; height: 18px; }
.h-thumb { width: 2180px; height: 20px; border-radius: 10px; background: #b2b2b2; margin-left: 182px; margin-right: 14px; }
.attr-foot { flex: 1; display: flex; align-items: center; background: #f7f9f8; margin: 1px -2px 0; padding-right: 11px; }
.view-btn { width: 64px; height: 43px; flex: none; margin-left: 1px; background: #c0c0c4; border: 2px solid #3db0f0; }
.vb-ic { width: 30px; height: 34px; }
.vb2 { width: 30px; height: 24px; margin-left: 20px; margin-top: -8px; }
.nav-ic { width: 20px; height: 24px; }
.n-first { margin-left: 35px; margin-top: -3px; }
.n-last { margin-left: 25px; margin-top: -3px; }
.sel-count { margin-left: 26px; white-space: nowrap; font-size: 24px; padding-top: 4px; }
.filters { margin-right: 10px; white-space: nowrap; font-size: 22px; color: #444; padding-top: 3px; }
.filter-box { width: 84px; height: 48px; flex: none; background: #ebedee; display: flex; align-items: center; justify-content: center; gap: 13px; }
.f-round { width: 28px; height: 34px; }
.f-funnel { width: 36px; height: 34px; margin-left: 7px; }
.f-arrows { width: 18px; height: 34px; margin-left: 14px; }
.z-minus { width: 12px; height: 4px; background: #666; margin-left: 30px; flex: none; }
.slider { width: 200px; height: 6px; margin-left: 14px; background: #dcdcdc; position: relative; flex: none; }
.slider-fill { display: block; width: 105px; height: 100%; background: #666; }
.slider-thumb { position: absolute; left: 102px; top: -8px; width: 6px; height: 22px; background: #666; }
.z-plus { width: 16px; height: 16px; margin-left: 14px; position: relative; flex: none; }
.z-plus i { position: absolute; background: #666; }
.z-plus i:first-child { left: 0; top: 6px; width: 16px; height: 4px; }
.z-plus i:last-child { left: 6px; top: 0; width: 4px; height: 16px; }
.zoom-box { width: 120px; height: 44px; margin-left: 14px; flex: none; background: #fff; display: flex; align-items: center; padding-left: 14px; color: #222; white-space: nowrap; padding-top: 2px; }
.zoom-box span { width: 85px; }
.s-f { margin-left: 11px; }
.f-ref { margin-left: 14px; }

/* side tabs */
.side { width: 64px; flex: none; padding-top: 11px; display: flex; flex-direction: column; }
.side-tab { border-right: 11px solid #c0c0c4; flex: none; font-size: 22.5px; color: #444; display: flex; justify-content: center; padding-left: 6px; }
.side-tab span { writing-mode: vertical-rl; white-space: nowrap; }
.st1 { height: 80px; }
.st2 { height: 156px; margin-top: 25px; }
.st3 { height: 120px; margin-top: 24px; }
.st4 { height: 172px; margin-top: 24px; }
.st5 { height: 116px; margin-top: 24px; }
.st6 { height: 171px; margin-top: 25px; }
```
